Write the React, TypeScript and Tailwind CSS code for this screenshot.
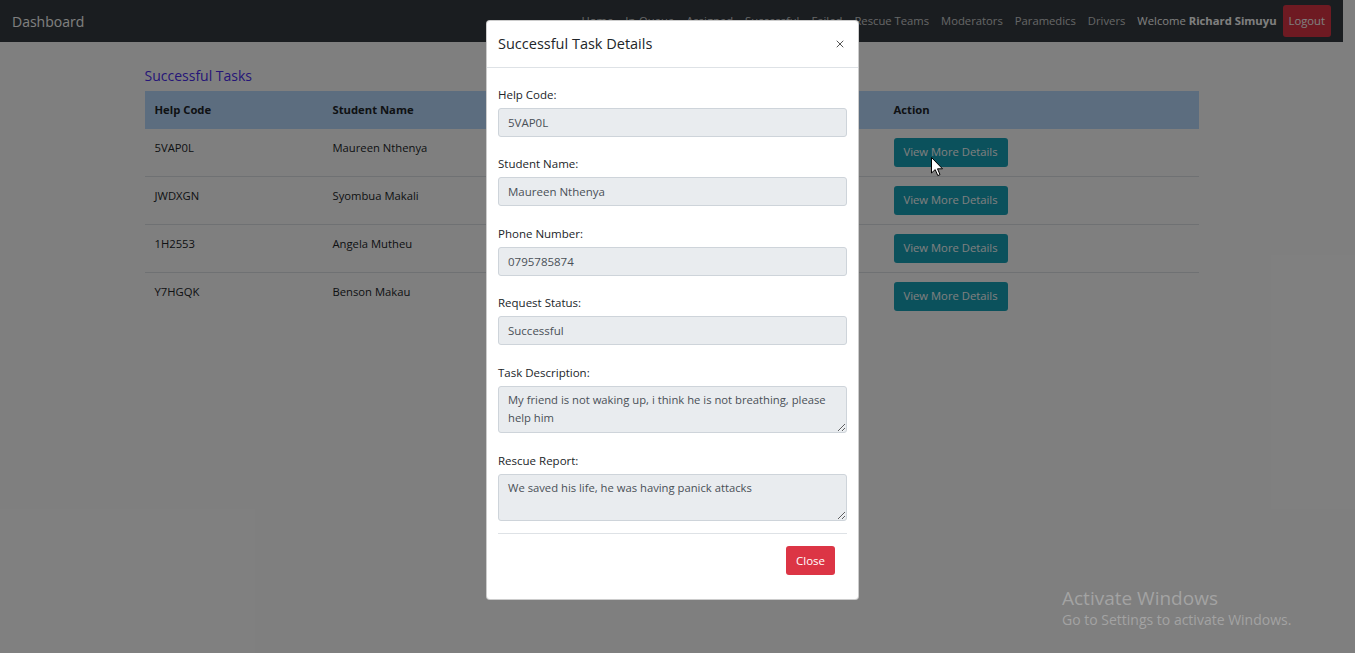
import { X } from "lucide-react";

const FONT = { fontFamily: '"Open Sans", "Noto Sans", sans-serif' };

const navLinks = ["Home", "In-Queue", "Assigned", "Successful", "Failed", "Rescue Teams", "Moderators", "Paramedics", "Drivers"];

const tasks = [
  { code: "5VAP0L", name: "Maureen Nthenya", phone: "0795785874", status: "Successful" },
  { code: "JWDXGN", name: "Syombua Makali", phone: "0712345678", status: "Successful" },
  { code: "1H2553", name: "Angela Mutheu", phone: "0722456789", status: "Successful" },
  { code: "Y7HGQK", name: "Benson Makau", phone: "0733567890", status: "Successful" },
];

const Field = ({ label, value, mb }: { label: string; value: string; mb: string }) => (
  <div className={mb}>
    <div className="text-[11.5px] leading-[18px] text-[#212529] mb-[4px]">{label}</div>
    <div className="h-[29px] px-[9px] flex items-center rounded-[3px] border border-[#ced4da] bg-[#e9ecef] text-[11.5px] text-[#495057]">
      {value}
    </div>
  </div>
);

const Area = ({ label, value, mb }: { label: string; value: string; mb: string }) => (
  <div className={mb}>
    <div className="text-[11.5px] leading-[18px] text-[#212529] mb-[4px]">{label}</div>
    <textarea
      readOnly
      rows={2}
      value={value}
      style={FONT}
      className="block w-full h-[47px] px-[9px] py-[4px] rounded-[3px] border border-[#ced4da] bg-[#e9ecef] text-[11.25px] leading-[18px] text-[#495057] resize-y outline-none"
    />
  </div>
);

export default function App() {
  return (
    <div className="relative w-[1355px] h-[653px] overflow-hidden bg-white" style={FONT}>
      <div className="w-[1343px]">
        {/* navbar */}
        <nav className="h-[42px] bg-[#343a40] flex items-center px-[12px]">
          <span className="text-[14px] text-white">Dashboard</span>
          <div className="ml-auto flex items-center">
            {navLinks.map((l) => (
              <span key={l} className="px-[6px] text-[11.25px] text-white/75">{l}</span>
            ))}
            <span className="px-[6px] text-[11.25px] text-white">
              Welcome <b>Richard Simuyu</b>
            </span>
            <button className="h-[32px] px-[6px] rounded-[3px] bg-[#dc3545] text-[11.25px] text-white">Logout</button>
          </div>
        </nav>

        {/* content */}
        <div className="w-[1054px] mx-auto pt-[25px]">
          <div className="text-[14px] leading-[18px] text-[#4b2df0] mb-[6px]">Successful Tasks</div>
          <table className="w-full table-fixed border-collapse text-[11.25px] text-[#212529]">
            <colgroup>
              <col className="w-[178px]" />
              <col className="w-[178px]" />
              <col className="w-[190px]" />
              <col className="w-[193px]" />
              <col className="w-[315px]" />
            </colgroup>
            <thead>
              <tr className="bg-[#b8daff]">
                {["Help Code", "Student Name", "Phone Number", "Status", "Action"].map((h) => (
                  <th key={h} className="text-left font-bold px-[10px] pt-[10px] pb-[8px] leading-[18px] border-b-2 border-[#b8daff]">{h}</th>
                ))}
              </tr>
            </thead>
            <tbody>
              {tasks.map((t) => (
                <tr key={t.code} className="border-t border-[#dee2e6] align-top">
                  <td className="px-[10px] py-[9px] leading-[20px]">{t.code}</td>
                  <td className="px-[10px] py-[9px] leading-[20px]">{t.name}</td>
                  <td className="px-[10px] py-[9px] leading-[20px]">{t.phone}</td>
                  <td className="px-[10px] py-[9px] leading-[20px]">{t.status}</td>
                  <td className="px-[10px] py-[9px]">
                    <button className="h-[29px] px-[10px] rounded-[3px] bg-[#17a2b8] text-white text-[11.25px]">View More Details</button>
                  </td>
                </tr>
              ))}
            </tbody>
          </table>
        </div>
      </div>

      {/* backdrop */}
      <div className="absolute inset-0 bg-black/50" />

      {/* modal */}
      <div className="absolute left-[486px] top-[20px] w-[373px] h-[580px] bg-white rounded-[4px] border border-black/20 flex flex-col">
        <div className="h-[47px] flex items-center justify-between px-[11px] border-b border-[#dee2e6]">
          <span className="text-[14.5px] text-[#212529]">Successful Task Details</span>
          <X size={12} strokeWidth={2} className="text-[#555] mr-[1px]" />
        </div>
        <div className="px-[11px] pt-[18px]">
          <Field label="Help Code:" value="5VAP0L" mb="mb-[18px]" />
          <Field label="Student Name:" value="Maureen Nthenya" mb="mb-[19px]" />
          <Field label="Phone Number:" value="0795785874" mb="mb-[18px]" />
          <Field label="Request Status:" value="Successful" mb="mb-[19px]" />
          <Area label="Task Description:" value="My friend is not waking up, i think he is not breathing, please help him" mb="mb-[19px]" />
          <Area label="Rescue Report:" value="We saved his life, he was having panick attacks" mb="mb-[12px]" />
          <div className="border-t border-[#dee2e6]" />
          <div className="flex justify-end pt-[12px] pr-[12px]">
            <button className="h-[29px] w-[49px] rounded-[3px] bg-[#dc3545] text-white text-[11.5px]">Close</button>
          </div>
        </div>
      </div>

      {/* mouse cursor */}
      <svg className="absolute left-[931px] top-[157px]" width="13" height="20" viewBox="0 0 13 20">
        <path d="M0.5 0.5 L0.5 16 L4.2 12.6 L6.8 18.6 L9 17.6 L6.5 11.8 L11.5 11.8 Z" fill="white" stroke="black" strokeWidth="1" />
      </svg>

      {/* windows watermark */}
      <div className="absolute left-[1062px] top-[586px] text-[#a3a3a3]">
        <div className="text-[19px] leading-[24px]">Activate Windows</div>
        <div className="text-[14px] leading-[20px]">Go to Settings to activate Windows.</div>
      </div>
    </div>
  );
}
